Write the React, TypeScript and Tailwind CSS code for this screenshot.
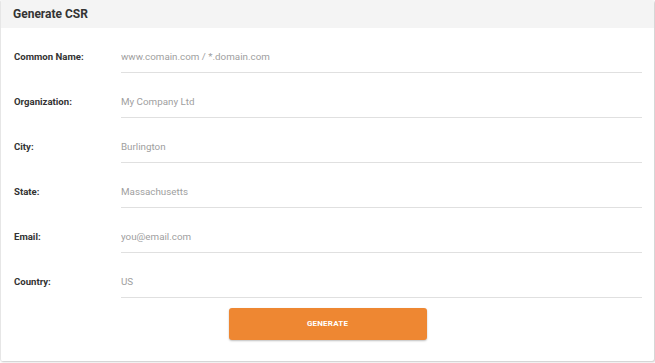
const fields = [
  { label: "Common Name:", placeholder: "www.comain.com / *.domain.com" },
  { label: "Organization:", placeholder: "My Company Ltd" },
  { label: "City:", placeholder: "Burlington" },
  { label: "State:", placeholder: "Massachusetts" },
  { label: "Email:", placeholder: "you@email.com" },
  { label: "Country:", placeholder: "US" },
];

function FieldRow({ label, placeholder }: { label: string; placeholder: string }) {
  return (
    <div className="flex items-end h-[45px]">
      <label className="w-[120px] shrink-0 pl-[13px] pb-[9px] text-[9.6px] leading-[14px] font-bold text-[#333]">
        {label}
      </label>
      <div className="flex-1 mr-[12px] h-full flex items-end border-b border-[#e0e0e0]">
        <input
          className="w-full bg-transparent outline-none pb-[8px] text-[9.8px] leading-[14px] text-[#333] placeholder:text-[#a0a0a0]"
          placeholder={placeholder}
        />
      </div>
    </div>
  );
}

export default function App() {
  return (
    <div className="w-[655px] h-[363px] bg-white" style={{ fontFamily: "Roboto, 'Liberation Sans', sans-serif" }}>
      <div className="w-[654px] bg-white rounded-[2px] border-l border-[#e6e6e6] shadow-[1px_1px_2px_rgba(0,0,0,0.22)] overflow-hidden">
        {/* Header */}
        <div className="h-[28px] bg-[#f4f4f4] flex items-center pl-[12px]">
          <h2 className="text-[12px] font-bold text-[#333]">Generate CSR</h2>
        </div>

        {/* Form */}
        <div className="pb-[21px]">
          {fields.map((f) => (
            <FieldRow key={f.label} label={f.label} placeholder={f.placeholder} />
          ))}
          <div className="flex justify-center mt-[10px]">
            <button className="w-[198px] h-[32px] rounded-[3px] bg-[#ee8732] text-white text-[8px] font-bold tracking-[0.2px] shadow-[0_1px_2px_rgba(0,0,0,0.25)]">
              GENERATE
            </button>
          </div>
        </div>
      </div>
    </div>
  );
}
